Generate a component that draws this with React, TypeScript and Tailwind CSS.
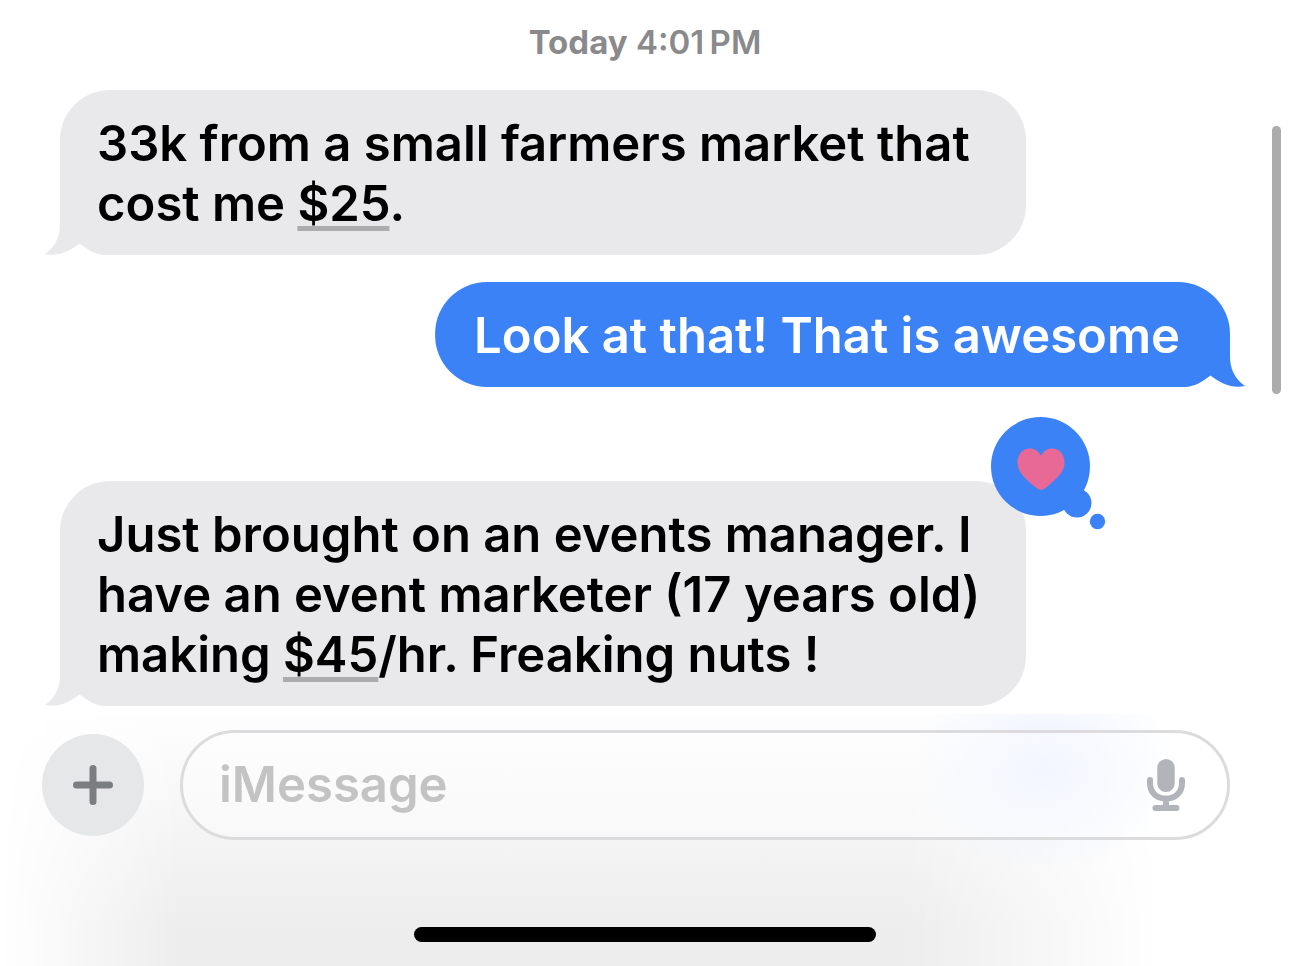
import { PropsWithChildren } from "react";

const Tail = ({ className }: { className: string }) => (
  <svg
    viewBox="0 0 60 36"
    aria-hidden="true"
    className={`absolute bottom-0 h-9 w-15 fill-current ${className}`}
  >
    <path d="M15 0V5C15 17 11 27 0 35C13 38 25 32 34.500 24.500C43 31 51 36 60 36V0Z" />
  </svg>
);

const Received = ({ children }: PropsWithChildren) => (
  <div className="relative max-w-[966px] self-start text-[#e9e9eb]">
    <div className="absolute inset-0 rounded-t-[50px] rounded-br-[50px] bg-current [clip-path:polygon(0_0,100%_0,100%_100%,44px_100%,44px_calc(100%-35px),0_calc(100%-35px))]" />
    <Tail className="-left-[15px]" />
    <p className="relative pt-6 pr-9 pb-[21px] pl-[37px] text-[49px] leading-[60px] font-semibold text-black">
      {children}
    </p>
  </div>
);

const Sent = ({ children }: PropsWithChildren) => (
  <div className="relative max-w-[966px] self-end text-[#3c82f7]">
    <div className="absolute inset-0 rounded-l-[52px] rounded-tr-[52px] bg-current [clip-path:polygon(0_0,100%_0,100%_calc(100%-35px),calc(100%-44px)_calc(100%-35px),calc(100%-44px)_100%,0_100%)]" />
    <Tail className="-right-[15px] -scale-x-100" />
    <p className="relative pt-6 pr-[50px] pb-[21px] pl-[39px] text-[49px] leading-[60px] font-semibold text-white">
      {children}
    </p>
  </div>
);

const Amount = ({ children }: PropsWithChildren) => (
  <a
    href="#"
    className="underline decoration-[#acacae] decoration-[5px] underline-offset-[5px] [text-decoration-skip-ink:none]"
  >
    {children}
  </a>
);

const LoveReaction = () => (
  <svg
    viewBox="0 0 115 114"
    role="img"
    aria-label="Loved"
    className="absolute -top-16 -right-20 h-[114px] w-[115px]"
  >
    <g fill="#3c82f7">
      <circle cx="49.500" cy="49.500" r="49.500" />
      <circle cx="86" cy="86" r="14.500" />
      <circle cx="106.500" cy="104.500" r="7.700" />
    </g>
    <path
      fill="#e86996"
      d="M50 38.500C47 34 43.500 31.500 39 31.500C31.500 31.500 26.500 37.500 26.500 45.500C26.500 54 32 60 46.500 71.800Q50 74 53.500 71.800C68 60 73.500 54 73.500 45.500C73.500 37.500 68.500 31.500 61 31.500C56.500 31.500 53 34 50 38.500Z"
    />
  </svg>
);

const PlusIcon = () => (
  <svg
    viewBox="0 0 40 40"
    aria-hidden="true"
    className="size-10 stroke-[#7b7e81]"
    strokeWidth="7"
    strokeLinecap="round"
  >
    <path d="M20 3.500V36.500M3.500 20H36.500" />
  </svg>
);

const MicIcon = () => (
  <svg
    viewBox="0 0 38 52"
    aria-hidden="true"
    className="h-[52px] w-[38px] text-[#b1b5b9]"
    fill="none"
    stroke="currentColor"
    strokeWidth="6"
    strokeLinecap="round"
  >
    <rect x="10.300" y="0" width="17.400" height="33" rx="8.700" fill="currentColor" stroke="none" />
    <path d="M3 21V24C3 33.500 9.500 39.500 19 39.500S35 33.500 35 24V21M19 41V48" />
    <path d="M8.500 49H29.500" />
  </svg>
);

const Composer = () => (
  <footer className="relative mt-2 flex flex-1 flex-col overflow-hidden">
    <div className="absolute inset-0 bg-linear-to-b from-[#fefefe] via-[#f2f2f2] via-60% to-[#ededed] to-85% [mask-image:linear-gradient(to_right,transparent,black_14%,black_70%,transparent_90%)]" />
    <div className="absolute top-0 left-[70%] h-40 w-[22%] bg-[radial-gradient(ellipse_at_50%_35%,#eaf0ff,transparent_68%)]" />
    <form
      className="relative flex items-center gap-9 pt-4 pr-15 pl-[42px]"
      onSubmit={(e) => e.preventDefault()}
    >
      <button
        type="button"
        aria-label="Add attachment"
        className="flex size-[102px] shrink-0 items-center justify-center rounded-full bg-[#e6e7e9]"
      >
        <PlusIcon />
      </button>
      <div className="flex h-[110px] flex-1 items-center rounded-full border-3 border-[#dcdcde] bg-white/40 pr-[42px] pl-9">
        <input
          type="text"
          aria-label="iMessage"
          placeholder="iMessage"
          className="min-w-0 flex-1 bg-transparent text-[49px] leading-[60px] font-semibold outline-none placeholder:text-[#c3c3c4]"
        />
        <button type="button" aria-label="Dictate">
          <MicIcon />
        </button>
      </div>
    </form>
    <div className="relative mx-auto mt-auto mb-6 h-[15px] w-[462px] rounded-full bg-black" />
  </footer>
);

const App = () => {
  return (
    <div className="relative flex min-h-screen flex-col bg-white font-['Inter','Liberation_Sans',sans-serif]">
      <main className="flex flex-col px-15 pt-[22px]">
        <p className="text-center text-[33px] leading-10 font-semibold text-[#8a8a8d]">
          <span className="font-bold">Today</span> 4:01{"\u2009"}PM
        </p>
        <div className="mt-7 flex flex-col">
          <Received>
            33k from a small farmers market that cost me <Amount>$25</Amount>.
          </Received>
          <div className="mt-[27px] flex flex-col">
            <Sent>Look at that! That is awesome</Sent>
          </div>
          <div className="relative mt-[94px] flex flex-col self-start">
            <Received>
              Just brought on an events manager. I have an event marketer (17
              years old) making <Amount>$45</Amount>/hr. Freaking nuts !
            </Received>
            <LoveReaction />
          </div>
        </div>
      </main>
      <Composer />
      <div className="absolute top-[126px] right-[9px] h-[268px] w-[9px] rounded-full bg-[#acacac]" />
    </div>
  );
};

export default App;
